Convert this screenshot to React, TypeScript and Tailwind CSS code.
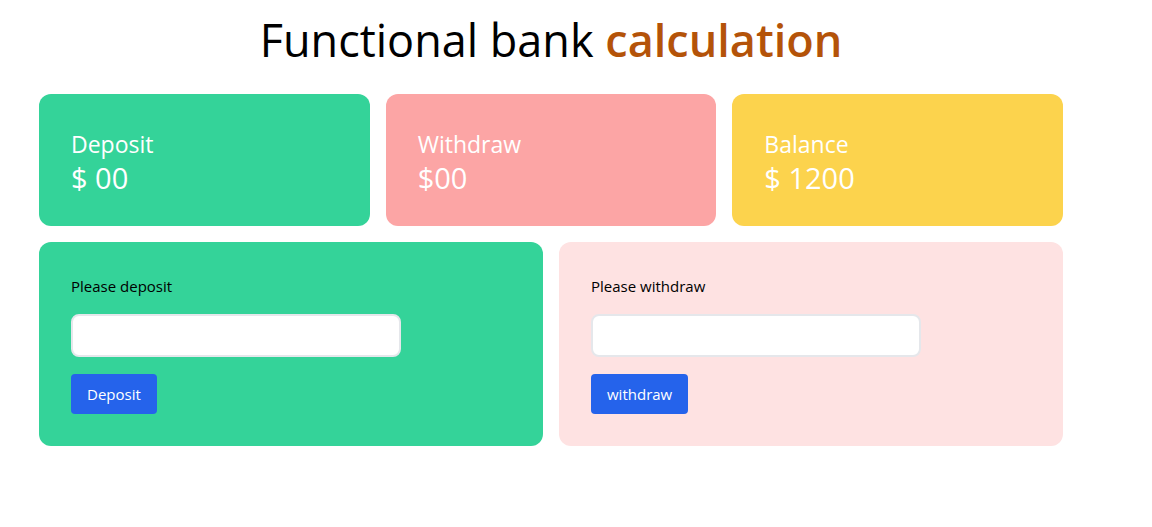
export default function App() {
  return (
    <div className="min-h-screen bg-white font-['Open_Sans',sans-serif]">
      <div className="ml-[39px] w-[1024px] pt-[16px]">
        <h1 className="text-center text-[45px] leading-[48px] text-black">
          Functional bank <span className="font-semibold text-[#b45309]">calculation</span>
        </h1>

        {/* Summary cards */}
        <div className="mt-[30px] grid grid-cols-3 gap-4">
          <div className="rounded-xl bg-[#34d399] px-8 pt-[34px] pb-[30px] text-white">
            <h3 className="text-[23px] leading-8">Deposit</h3>
            <h2 className="text-[29px] leading-9">$ 00</h2>
          </div>
          <div className="rounded-xl bg-[#fca5a5] px-8 pt-[34px] pb-[30px] text-white">
            <h3 className="text-[23px] leading-8">Withdraw</h3>
            <h2 className="text-[29px] leading-9">$00</h2>
          </div>
          <div className="rounded-xl bg-[#fcd34d] px-8 pt-[34px] pb-[30px] text-white">
            <h3 className="text-[23px] leading-8">Balance</h3>
            <h2 className="text-[29px] leading-9">$ 1200</h2>
          </div>
        </div>

        {/* Forms */}
        <div className="mt-4 grid grid-cols-2 gap-4">
          <div className="rounded-xl bg-[#34d399] p-8">
            <p className="text-[15px] leading-6 text-black">Please deposit</p>
            <input
              type="text"
              className="mt-4 block h-[43px] w-[330px] rounded-lg border-2 border-[#e5e7eb] bg-white px-3 outline-none"
            />
            <button className="mt-[17px] h-10 rounded bg-[#2563eb] px-4 text-[15px] text-white">Deposit</button>
          </div>
          <div className="rounded-xl bg-[#fee2e2] p-8">
            <p className="text-[15px] leading-6 text-black">Please withdraw</p>
            <input
              type="text"
              className="mt-4 block h-[43px] w-[330px] rounded-lg border-2 border-[#e5e7eb] bg-white px-3 outline-none"
            />
            <button className="mt-[17px] h-10 rounded bg-[#2563eb] px-4 text-[15px] text-white">withdraw</button>
          </div>
        </div>
      </div>
    </div>
  )
}
